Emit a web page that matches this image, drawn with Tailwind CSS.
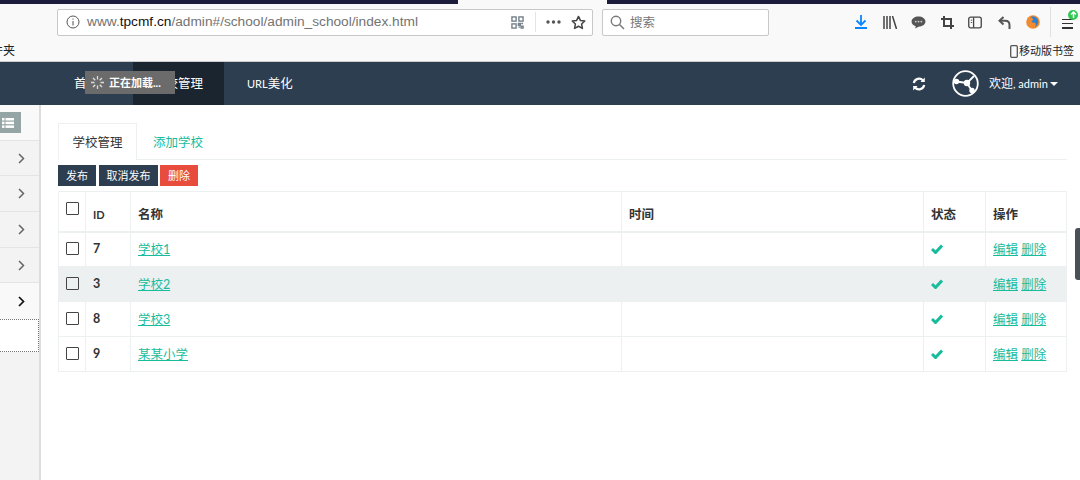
<!DOCTYPE html>
<html>
<head>
<meta charset="utf-8">
<script src="https://cdn.jsdelivr.net/npm/@tailwindcss/browser@4"></script>
</head>
<body class="w-[1080px] h-[480px] overflow-hidden bg-white relative font-['Lato','Noto_Sans_CJK_SC',sans-serif] text-[12.5px] text-[#333]">

<!-- browser chrome -->
<div class="h-[62px] bg-[#f9f9fa] relative border-b border-[#ccc]">
  <div class="flex h-[4px]">
    <div class="w-[458px] bg-[#1c1c3c]"></div>
    <div class="w-[149px]"></div>
    <div class="flex-1 bg-[#1c1c3c]"></div>
  </div>
  <div class="flex items-center h-[32px] mt-[2px]">
    <div class="ml-[57px] w-[536px] h-[27px] bg-white border border-[#c8c8c8] rounded-[2px] flex items-center">
      <svg class="ml-[8px] w-[14px] h-[14px]" viewBox="0 0 14 14" fill="none" stroke="#555"><circle cx="7" cy="7" r="6"/><path d="M7 6v4.500M7 3.500v1.200"/></svg>
      <span class="ml-[7px] pt-[1px] text-[13.7px] font-['Liberation_Sans'] text-[#737373] whitespace-nowrap">www.<span class="text-[#111]">tpcmf.cn</span>/admin#/school/admin_school/index.html</span>
      <svg class="ml-[93px] w-[13px] h-[13px]" viewBox="0 0 14 14" fill="none" stroke="#75808a" stroke-width="1.500"><rect x="1" y="1" width="4.500" height="4.500"/><rect x="8.500" y="1" width="4.500" height="4.500"/><rect x="1" y="8.500" width="4.500" height="4.500"/><path d="M8 8h2v2H8zM11 11h2v2h-2zM11 8h2M8 12h2"/></svg>
      <span class="ml-[11px] w-px h-[20px] bg-[#e4e4e4]"></span>
      <svg class="ml-[10px] w-[15px] h-[4px]" viewBox="0 0 15 4" fill="#555"><circle cx="2" cy="2" r="1.700"/><circle cx="7.500" cy="2" r="1.700"/><circle cx="13" cy="2" r="1.700"/></svg>
      <svg class="ml-[10px] w-[15px] h-[15px]" viewBox="0 0 16 16" fill="none" stroke="#444" stroke-width="1.600" stroke-linejoin="round"><path d="M8 1.500l2 4.300 4.700.6-3.400 3.200.9 4.700L8 12l-4.200 2.300.9-4.700L1.300 6.400 6 5.800z"/></svg>
    </div>
    <div class="ml-[9px] w-[167px] h-[27px] bg-white border border-[#c8c8c8] rounded-[2px] flex items-center">
      <svg class="ml-[7px] w-[15px] h-[15px]" viewBox="0 0 15 15" fill="none" stroke="#777" stroke-width="1.400"><circle cx="6" cy="6" r="4.700"/><path d="M9.500 9.500L14 14"/></svg>
      <span class="ml-[5px] pt-[2px] text-[12.5px] text-[#777]">搜索</span>
    </div>
    <div class="ml-[86px] flex items-center">
      <svg class="w-[12px] h-[14px]" viewBox="0 0 12 14" fill="none" stroke="#0a84ff" stroke-width="1.800"><path d="M6 0v9.500M1.500 5.500L6 10l4.500-4.500M0 13h12"/></svg>
      <svg class="ml-[16px] w-[14px] h-[13px]" viewBox="0 0 14 13" fill="none" stroke="#444" stroke-width="1.500"><path d="M1 0v13M4 0v13M7 0v13M9.500 0l4 13"/></svg>
      <svg class="ml-[14px] w-[15px] h-[13px]" viewBox="0 0 16 14"><path d="M8 .5c4 0 7.500 2.200 7.500 5.500S12 11.500 8 11.500L4.500 13.500l.5-2.500C2.500 10.500.5 8.500.5 6 .5 2.700 4 .5 8 .5z" fill="#555"/><circle cx="5" cy="6" r="1" fill="#ccc"/><circle cx="8" cy="6" r="1" fill="#ccc"/><circle cx="11" cy="6" r="1" fill="#ccc"/></svg>
      <svg class="ml-[15px] w-[13px] h-[13px]" viewBox="0 0 13 13" fill="none" stroke="#444" stroke-width="2"><path d="M3 0v10h10M0 3h10v10"/></svg>
      <svg class="ml-[14px] w-[14px] h-[13px]" viewBox="0 0 15 13" fill="none" stroke="#444" stroke-width="1.400"><rect x=".8" y=".8" width="13.400" height="11.400" rx="2"/><path d="M6 1v11"/><path d="M3 4h1.500M3 6.500h1.500" stroke-width="1"/></svg>
      <svg class="ml-[16px] w-[13px] h-[13px]" viewBox="0 0 13 13" fill="none" stroke="#555" stroke-width="2"><path d="M5.500 1L1.500 4.800l4 3.700"/><path d="M2 4.800h5c3 0 4.500 2 4.500 4.200V13"/></svg>
      <svg class="ml-[15px] w-[14px] h-[14px]" viewBox="0 0 15 15"><circle cx="7.500" cy="7.500" r="7.300" fill="#f28b30"/><path d="M5 2c3-1 7 0 8 4 .6 3-1 6-4 7 2-2 2-4 0-5-1.500.5-3 0-3-1.500L8 5C7 3.500 6 3 5 2z" fill="#2e7fd6"/></svg>
      <span class="ml-[10px] w-px h-[30px] bg-[#e0e0e0]"></span>
      <span class="ml-[11px] relative w-[11px] h-[10px] flex flex-col justify-between mt-[3px]">
        <i class="block h-[1.500px] bg-[#333]"></i><i class="block h-[1.500px] bg-[#333]"></i><i class="block h-[1.500px] bg-[#333]"></i>
        <span class="absolute -top-[9px] left-[6px] w-[10px] h-[10px] rounded-full bg-[#30c850] flex items-center justify-center">
          <svg class="w-[7px] h-[7px]" viewBox="0 0 7 7" fill="none" stroke="#fff" stroke-width="1.500"><path d="M3.500 7V1M1 3.500L3.500 1 6 3.500"/></svg>
        </span>
      </span>
    </div>
  </div>
  <div class="flex justify-between items-center h-[16px] mt-[5px] text-[#222]">
    <span class="w-[15px] overflow-hidden whitespace-nowrap flex justify-end text-[12px]">件夹</span>
    <span class="flex items-center mr-[6px] text-[11px]">
      <svg class="w-[8px] h-[13px] mr-[1px]" viewBox="0 0 8 13" fill="none" stroke="#555" stroke-width="1.300"><rect x=".7" y=".7" width="6.600" height="11.600" rx="1"/></svg>
      移动版书签
    </span>
  </div>
</div>

<!-- top nav -->
<div class="h-[43px] bg-[#2c3e50] flex items-center text-white relative">
  <div class="ml-[59px] w-[74px] h-full flex items-center pl-[15px] pt-[2px]">首页</div>
  <div class="w-[91px] h-full flex items-center pl-[20px] pt-[2px] bg-[#1a252f]">学校管理</div>
  <div class="h-full flex items-center pl-[23px] pt-[2px]"><span class="text-[11px]">URL</span>美化</div>
  <div class="ml-auto flex items-center mr-[22px]">
    <svg class="w-[14px] h-[14px] mr-[26px]" viewBox="0 0 14 14" fill="none" stroke="#fff" stroke-width="2.200"><path d="M1.800 6A5.300 5.300 0 0 1 11 3.500M12.200 8A5.300 5.300 0 0 1 3 10.500"/><path d="M12.800 .5v4.500H8.500M1.200 13.500V9h4.300" fill="#fff" stroke="none"/></svg>
    <svg class="w-[27px] h-[27px] mr-[10px]" viewBox="0 0 27 27" fill="none" stroke="#fff" stroke-width="1.800"><circle cx="13.500" cy="13.500" r="12.300"/><path d="M2 11.500h2.500L15 13M15 13l7-7M15 13l5 8"/><circle cx="15" cy="13" r="2.300" fill="#fff"/><circle cx="4.500" cy="11.500" r="1.800" fill="#fff"/><circle cx="20" cy="20.500" r="1.800" fill="#fff"/></svg>
    <span class="text-[12px] pt-[1px] w-[58px] whitespace-nowrap">欢迎<span class="text-[11px]">, admin</span></span>
    <span class="ml-[3px] w-0 h-0 border-x-[4px] border-x-transparent border-t-[4px] border-t-white"></span>
  </div>
</div>

<!-- loading toast -->
<div class="absolute left-[85px] top-[71px] w-[90px] h-[23px] bg-[#6b6b6b] text-white text-[11px] font-bold flex items-center pl-[6px]">
  <svg class="w-[13px] h-[13px] mr-[5px]" viewBox="0 0 13 13" stroke="#ddd" stroke-width="1.300"><path d="M6.500 0v3.500M6.500 9.500V13M0 6.500h3.500M9.500 6.500H13M2 2l2.300 2.300M8.700 8.700L11 11M11 2L8.700 4.300M4.300 8.700L2 11"/></svg>
  <span class="pt-[1px]">正在加载...</span>
</div>

<div class="flex h-[375px]">
  <!-- sidebar -->
  <div class="w-[41px] shrink-0 bg-[#f3f3f4] border-r-2 border-[#ddd] h-full flex flex-col">
    <div class="h-[36px] bg-[#f9f9f9] border-b border-[#e4e4e4] flex items-start pt-[7px]">
      <span class="w-[21px] h-[21px] bg-[#95a5a6] flex items-center pl-[2px]">
        <svg class="w-[12px] h-[10px]" viewBox="0 0 12 10" fill="#fff"><rect width="2.500" height="2.500"/><rect x="3.500" width="8.500" height="2.500"/><rect y="3.700" width="2.500" height="2.500"/><rect x="3.500" y="3.700" width="8.500" height="2.500"/><rect y="7.400" width="2.500" height="2.500"/><rect x="3.500" y="7.400" width="8.500" height="2.500"/></svg>
      </span>
    </div>
    <div class="h-[35px] border-b border-[#e4e4e4] flex items-center justify-end pr-[14px]"><svg class="w-[7px] h-[11px]" viewBox="0 0 7 11" fill="none" stroke="#666" stroke-width="1.500"><path d="M1 1l4.500 4.500L1 10"/></svg></div>
    <div class="h-[36px] border-b border-[#e4e4e4] flex items-center justify-end pr-[14px]"><svg class="w-[7px] h-[11px]" viewBox="0 0 7 11" fill="none" stroke="#666" stroke-width="1.500"><path d="M1 1l4.500 4.500L1 10"/></svg></div>
    <div class="h-[36px] border-b border-[#e4e4e4] flex items-center justify-end pr-[14px]"><svg class="w-[7px] h-[11px]" viewBox="0 0 7 11" fill="none" stroke="#666" stroke-width="1.500"><path d="M1 1l4.500 4.500L1 10"/></svg></div>
    <div class="h-[35px] border-b border-[#e4e4e4] flex items-center justify-end pr-[14px]"><svg class="w-[7px] h-[11px]" viewBox="0 0 7 11" fill="none" stroke="#666" stroke-width="1.500"><path d="M1 1l4.500 4.500L1 10"/></svg></div>
    <div class="h-[36px] bg-[#f9f9f9] flex items-center justify-end pr-[14px]"><svg class="w-[7px] h-[11px]" viewBox="0 0 7 11" fill="none" stroke="#111" stroke-width="1.700"><path d="M1 1l4.500 4.500L1 10"/></svg></div>
    <div class="h-[33px] bg-white border-y border-r border-dotted border-[#777]"></div>
  </div>

  <!-- main -->
  <div class="flex-1 pl-[17px] pr-[14px] pt-[18px]">
    <div class="flex h-[37px] border-b border-[#ecf0f1]">
      <div class="w-[79px] h-[37px] pt-[2px] bg-white border border-b-0 border-[#ecf0f1] flex items-center justify-center text-[#333]">学校管理</div>
      <div class="ml-[16px] h-[37px] pt-[3px] flex items-center text-[#18bc9c]">添加学校</div>
    </div>
    <div class="flex gap-[2px] mt-[5px] mb-[5px] text-white text-[11px]">
      <span class="w-[38px] h-[21px] pt-[1px] bg-[#2c3e50] flex items-center justify-center">发布</span>
      <span class="ml-[1px] w-[59px] h-[21px] pt-[1px] bg-[#2c3e50] flex items-center justify-center">取消发布</span>
      <span class="w-[38px] h-[21px] pt-[1px] bg-[#e74c3c] flex items-center justify-center">删除</span>
    </div>
    <table class="w-[1008px] table-fixed border-collapse border border-[#ecf0f1]">
      <colgroup>
        <col class="w-[27px]"><col class="w-[45px]"><col class="w-[491px]"><col class="w-[302px]"><col class="w-[62px]"><col class="w-[81px]">
      </colgroup>
      <thead>
        <tr class="h-[40px] border-b-2 border-[#ecf0f1] font-bold text-left">
          <th class="border-x border-[#ecf0f1] align-middle pl-[7px]"><span class="block w-[13px] h-[13px] border border-[#444] rounded-[1px] -mt-[6px]"></span></th>
          <th class="border-x border-[#ecf0f1] pl-[7px] align-bottom pb-[7px] text-[11px]">ID</th>
          <th class="border-x border-[#ecf0f1] pl-[7px] align-bottom pb-[6px]">名称</th>
          <th class="border-x border-[#ecf0f1] pl-[7px] align-bottom pb-[6px]">时间</th>
          <th class="border-x border-[#ecf0f1] pl-[7px] align-bottom pb-[6px]">状态</th>
          <th class="border-x border-[#ecf0f1] pl-[7px] align-bottom pb-[6px]">操作</th>
        </tr>
      </thead>
      <tbody id="rows"></tbody>
    </table>
  </div>
</div>

<!-- page side handle -->
<div class="absolute right-0 top-[228px] w-[5px] h-[52px] bg-[#4a5058] rounded-l-[3px]"></div>

<script>
const schools = [
  { id: 7, name: '学校1' },
  { id: 3, name: '学校2' },
  { id: 8, name: '学校3' },
  { id: 9, name: '某某小学' }
];

document.getElementById('rows').innerHTML = schools.map((s, i) => `
  <tr class="h-[35px] border-b border-[#ecf0f1] ${i === 1 ? 'bg-[#ecf0f1]' : ''}">
    <td class="border-x border-[#ecf0f1] pl-[7px]"><span class="block w-[13px] h-[13px] border border-[#444] rounded-[1px] -mt-[2px]"></span></td>
    <td class="border-x border-[#ecf0f1] pl-[7px] text-[12.5px] font-bold">${s.id}</td>
    <td class="border-x border-[#ecf0f1] pl-[7px] pt-[2px]"><a class="text-[#18bc9c] underline">${s.name}</a></td>
    <td class="border-x border-[#ecf0f1]"></td>
    <td class="border-x border-[#ecf0f1] pl-[7px]"><svg class="w-[12px] h-[10px] mb-[1px]" viewBox="0 0 12 10" fill="none" stroke="#18bc9c" stroke-width="3"><path d="M1 5l3.500 3.500L11 1.500"/></svg></td>
    <td class="border-x border-[#ecf0f1] pl-[7px] pt-[2px]"><a class="text-[#18bc9c] underline">编辑</a> <a class="text-[#18bc9c] underline">删除</a></td>
  </tr>`).join('');
</script>
</body>
</html>
